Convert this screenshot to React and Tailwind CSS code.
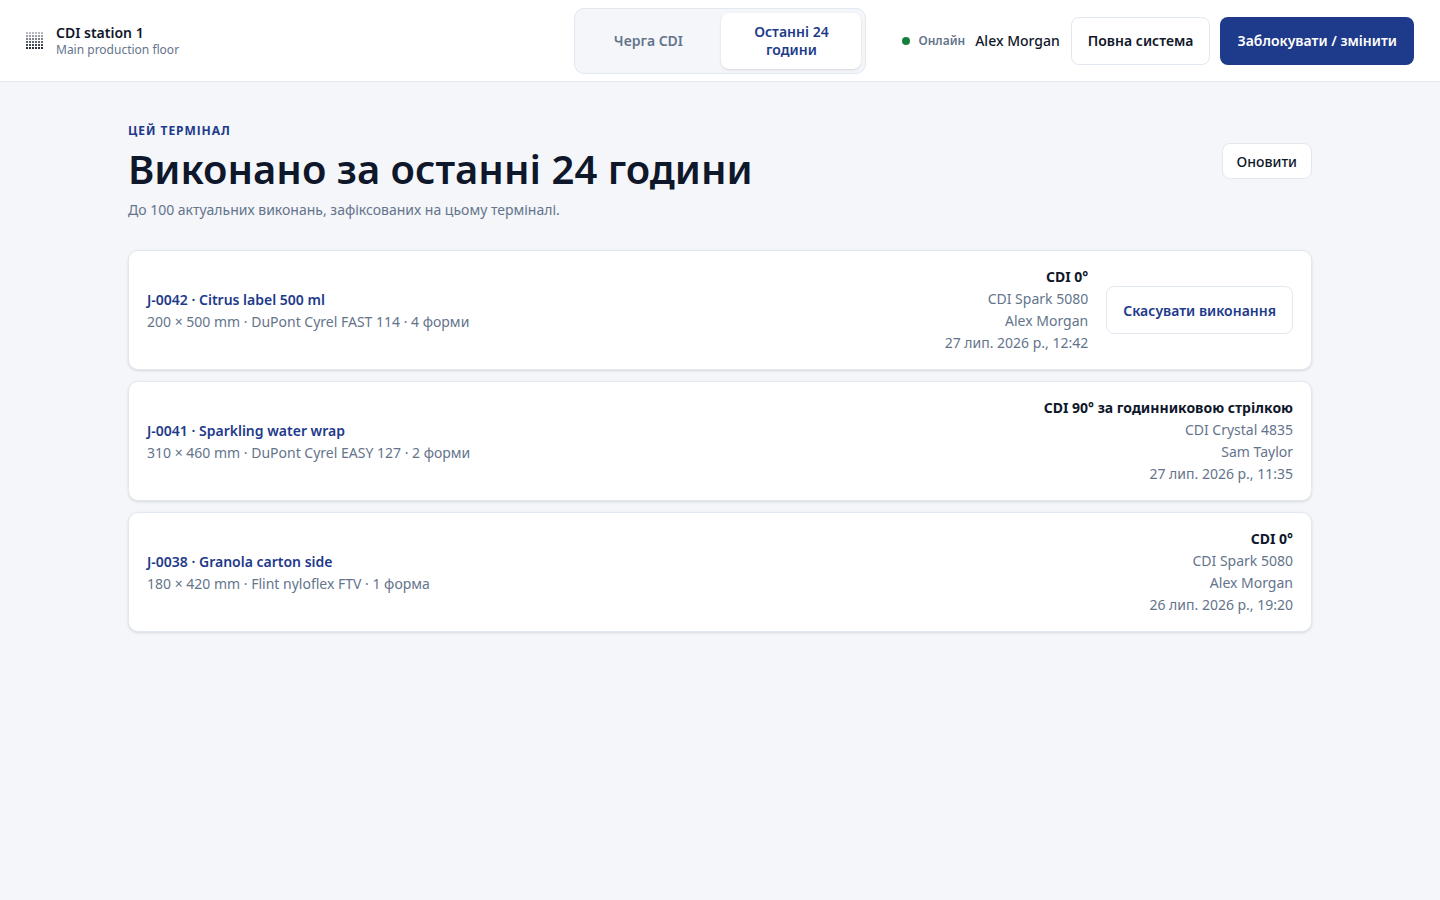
import React from "react";

const rows = [
  { id: "J-0042 · Citrus label 500 ml", sub: "200 × 500 mm · DuPont Cyrel FAST 114 · 4 форми", t: "CDI 0°", m: "CDI Spark 5080", u: "Alex Morgan", d: "27 лип. 2026 р., 12:42", cancel: true },
  { id: "J-0041 · Sparkling water wrap", sub: "310 × 460 mm · DuPont Cyrel EASY 127 · 2 форми", t: "CDI 90° за годинниковою стрілкою", m: "CDI Crystal 4835", u: "Sam Taylor", d: "27 лип. 2026 р., 11:35" },
  { id: "J-0038 · Granola carton side", sub: "180 × 420 mm · Flint nyloflex FTV · 1 форма", t: "CDI 0°", m: "CDI Spark 5080", u: "Alex Morgan", d: "26 лип. 2026 р., 19:20" },
];

function Logo() {
  const cells = [];
  for (let y = 0; y < 6; y++)
    for (let x = 0; x < 6; x++)
      cells.push(<rect key={x + "-" + y} x={x * 3} y={y * 3} width="2" height="2" fill="#111827" opacity={0.3 + 0.12 * y} />);
  return <svg width="18" height="18" viewBox="0 0 18 18">{cells}</svg>;
}

export default function App() {
  return (
    <div className="min-h-screen bg-[#f4f6fa] text-[#0f172a]" style={{ fontFamily: '"Noto Sans", sans-serif' }}>
      <header className="h-[82px] bg-white border-b border-[#e5e7eb] flex items-center px-[26px]">
        <div className="flex items-center gap-3">
          <Logo />
          <div className="leading-tight">
            <div className="text-[14px] font-semibold">CDI station 1</div>
            <div className="text-[12px] text-[#64748b]">Main production floor</div>
          </div>
        </div>
        <div className="ml-auto flex items-center">
          <div className="flex p-[4px] gap-1 rounded-[10px] border border-[#e2e8f0] bg-[#f4f6fa] mr-[36px]">
            <div className="w-[138px] h-[56px] flex items-center justify-center text-[14px] font-semibold text-[#64748b]">Черга CDI</div>
            <div className="w-[140px] h-[56px] flex items-center justify-center text-center text-[14px] leading-[18px] font-semibold text-[#1e3a8a] bg-white rounded-[8px] shadow-sm">Останні 24<br />години</div>
          </div>
          <span className="w-2 h-2 rounded-full bg-[#15803d] mr-2"></span>
          <span className="text-[12px] font-semibold text-[#64748b] mr-[10px]">Онлайн</span>
          <span className="text-[14px] font-medium mr-[11px]">Alex Morgan</span>
          <button className="h-[48px] px-4 rounded-[8px] border border-[#e2e8f0] bg-white text-[14px] font-semibold mr-[10px]">Повна система</button>
          <button className="h-[48px] px-[17px] rounded-[8px] bg-[#1e3a8a] text-white text-[14px] font-semibold">Заблокувати / змінити</button>
        </div>
      </header>
      <main className="w-[1184px] mx-auto pt-[40px]">
        <div className="flex items-start justify-between">
          <div>
            <div className="text-[12px] font-bold tracking-[0.08em] text-[#1e3a8a]">ЦЕЙ ТЕРМІНАЛ</div>
            <h1 className="text-[40px] font-semibold leading-[52px] mt-[3px]">Виконано за останні 24 години</h1>
            <p className="text-[14px] text-[#64748b] mt-[4px]">До 100 актуальних виконань, зафіксованих на цьому терміналі.</p>
          </div>
          <button className="mt-[21px] h-[36px] px-[14px] rounded-[8px] border border-[#e2e8f0] bg-white text-[14px] font-medium">Оновити</button>
        </div>
        <div className="mt-[30px] flex flex-col gap-[11px]">
          {rows.map((r) => (
            <div key={r.id} className="h-[120px] bg-white border border-[#e2e8f0] rounded-[10px] shadow-sm flex items-center px-[18px]">
              <div>
                <div className="text-[14px] font-semibold text-[#1e3a8a]">{r.id}</div>
                <div className="text-[14px] text-[#64748b] mt-[1px]">{r.sub}</div>
              </div>
              <div className="ml-auto text-right text-[14px] leading-[22px] text-[#64748b]">
                <div className="font-bold text-[#0f172a]">{r.t}</div>
                <div>{r.m}</div>
                <div>{r.u}</div>
                <div>{r.d}</div>
              </div>
              {r.cancel && (
                <button className="ml-[18px] h-[48px] px-4 rounded-[8px] border border-[#e2e8f0] bg-white text-[14px] font-semibold text-[#1e3a8a]">Скасувати виконання</button>
              )}
            </div>
          ))}
        </div>
      </main>
    </div>
  );
}
